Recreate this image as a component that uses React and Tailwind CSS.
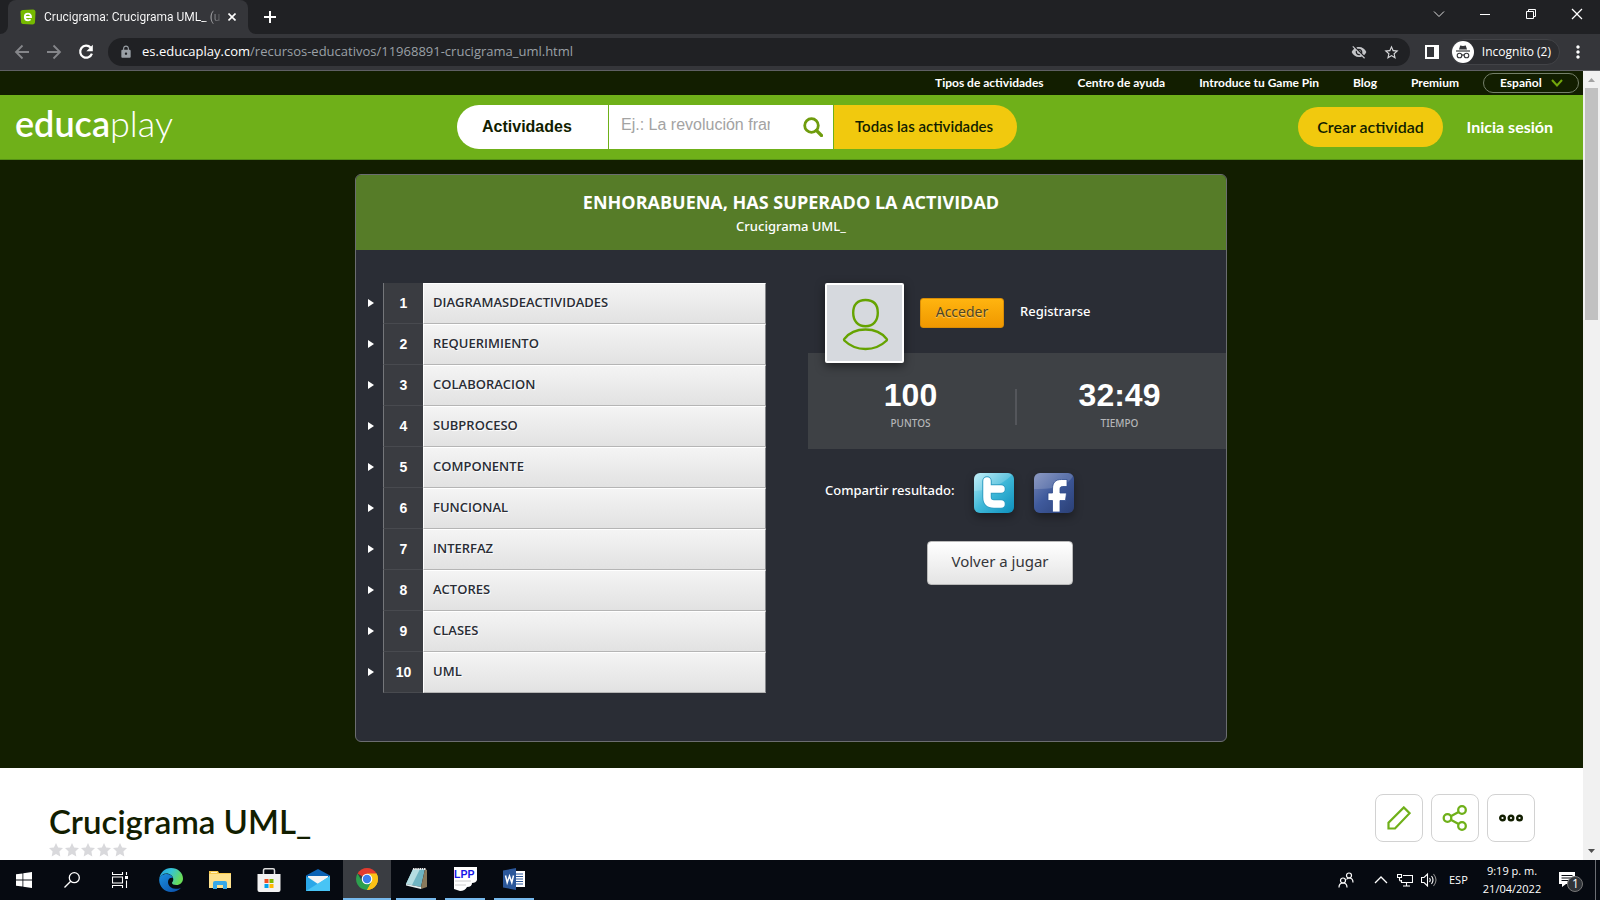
import React from 'react';
import { VscChromeClose } from 'react-icons/vsc';
import { MdLock, MdStarBorder, MdMoreVert, MdVisibilityOff } from 'react-icons/md';

const clues = [
  'DIAGRAMASDEACTIVIDADES',
  'REQUERIMIENTO',
  'COLABORACION',
  'SUBPROCESO',
  'COMPONENTE',
  'FUNCIONAL',
  'INTERFAZ',
  'ACTORES',
  'CLASES',
  'UML',
];

function TabStrip() {
  return (
    <div className="flex h-[34px] shrink-0 items-start justify-between bg-[#202124] text-white">
      <div className="flex h-full items-end">
        <svg className="size-2" viewBox="0 0 8 8"><path d="M8 0v8H0a8 8 0 0 0 8-8z" fill="#35363a" /></svg>
        <div className="flex h-full w-60 items-center rounded-t-lg bg-[#35363a] pl-3 pr-2">
          <svg className="size-4 shrink-0" viewBox="0 0 16 16">
            <path d="M3 1l10-.5c1.500 0 2.500 1 2.500 2.500l-.5 10c0 1.500-1 2.500-2.500 2.500L3 15c-1.500 0-2-1-2-2.500L.5 3C.5 2 1.500 1 3 1z" fill="#76b900" />
            <path d="M4.800 8h6.200c0-2-1.200-3.300-3-3.300S4.800 6 4.800 8s1.300 3.300 3.300 3.300c1 0 1.800-.3 2.500-.9" fill="none" stroke="#fff" strokeWidth="1.800" />
          </svg>
          <span className="ml-2 w-[176px] whitespace-nowrap bg-linear-to-r from-white from-90% to-[#55565a] bg-clip-text font-[Roboto,sans-serif] text-xs text-transparent">
            Crucigrama: Crucigrama UML_ (u
          </span>
          <button aria-label="Cerrar pestaña" className="ml-1 flex size-4 shrink-0 items-center justify-center">
            <svg className="size-2" viewBox="0 0 8 8"><path d="M.5.5l7 7m0-7l-7 7" stroke="#fff" strokeWidth="1.600" /></svg>
          </button>
        </div>
        <svg className="size-2" viewBox="0 0 8 8"><path d="M0 0v8h8a8 8 0 0 1-8-8z" fill="#35363a" /></svg>
        <button aria-label="Nueva pestaña" className="flex h-full w-7 items-center justify-center">
          <svg className="size-3" viewBox="0 0 12 12"><path d="M6 0v12M0 6h12" stroke="#fff" strokeWidth="2" /></svg>
        </button>
      </div>
      <div className="flex h-7 w-[184px] items-center">
        <button aria-label="Buscar pestañas" className="flex flex-1 justify-center">
          <svg className="h-3 w-3" viewBox="0 0 12 12"><path d="M1 3.500l5 5 5-5" fill="none" stroke="#ddd" /></svg>
        </button>
        <button aria-label="Minimizar" className="flex flex-1 justify-center">
          <svg className="size-[10px]" viewBox="0 0 10 10"><path d="M0 5.500h10" stroke="#fff" /></svg>
        </button>
        <button aria-label="Restaurar" className="flex flex-1 justify-center">
          <svg className="size-[10px]" viewBox="0 0 10 10"><path d="M.5 2.500h7v7h-7zM2.500 2.500v-2h7v7h-2" fill="none" stroke="#fff" /></svg>
        </button>
        <button aria-label="Cerrar" className="flex flex-1 justify-center">
          <VscChromeClose className="size-4 text-white" />
        </button>
      </div>
    </div>
  );
}

function Toolbar() {
  return (
    <div className="flex h-[37px] shrink-0 items-center border-b border-[#5f6064] bg-[#35363a] pl-[14px] pr-3 font-['Open_Sans',sans-serif] text-white">
      <div className="flex items-center gap-4">
        <button aria-label="Atrás" className="size-4">
          <svg className="size-4" viewBox="0 0 16 16"><path d="M15 8H2m6.500-6.500L2 8l6.500 6.500" fill="none" stroke="#85868a" strokeWidth="1.800" /></svg>
        </button>
        <button aria-label="Adelante" className="size-4">
          <svg className="size-4" viewBox="0 0 16 16"><path d="M1 8h13M7.500 1.500L14 8l-6.500 6.500" fill="none" stroke="#85868a" strokeWidth="1.800" /></svg>
        </button>
        <button aria-label="Recargar" className="size-4">
          <svg className="size-4" viewBox="0 0 16 16"><path d="M12.600 3.600A6 6 0 1 0 13.900 9.600" fill="none" stroke="#fff" strokeWidth="2.200" /><path d="M14.800.8v6.400H8.400z" fill="#fff" /></svg>
        </button>
      </div>
      <div className="ml-[14px] flex h-7 flex-1 items-center rounded-full bg-[#202124] pl-[11px] pr-[10px]">
        <MdLock className="size-[14px] text-[#9aa0a6]" />
        <a href="#url" className="ml-[9px] flex-1 text-[13px] text-[#9aa0a6]">
          <span className="text-white">es.educaplay.com</span>/recursos-educativos/11968891-crucigrama_uml.html
        </a>
        <MdVisibilityOff className="size-4 text-[#c4c5c8]" />
        <button aria-label="Añadir a marcadores" className="ml-4"><MdStarBorder className="size-[17px] text-[#d6d7d9]" /></button>
      </div>
      <button aria-label="Panel lateral" className="ml-[15px]">
        <svg className="size-[14px]" viewBox="0 0 14 14"><path fillRule="evenodd" d="M0 0h14v14H0zM2 2v10h7V2z" fill="#fff" /></svg>
      </button>
      <button className="ml-3 flex h-[26px] items-center whitespace-nowrap rounded-full border border-[#424347] bg-[#2b2c30] pr-2 text-xs">
        <svg className="mr-2 size-[22px]" viewBox="0 0 22 22">
          <circle cx="11" cy="11" r="11" fill="#fff" />
          <path d="M7 8.500l1.200-4 2.800.6 2.800-.6 1.200 4z" fill="#35363a" />
          <path d="M4 10h14" stroke="#35363a" strokeWidth="1.200" />
          <g fill="none" stroke="#35363a" strokeWidth="1.100"><circle cx="7.500" cy="14.500" r="2.300" /><circle cx="14.500" cy="14.500" r="2.300" /><path d="M9.800 14.200q1.200-.6 2.400 0" /></g>
        </svg>
        Incognito (2)
      </button>
      <button aria-label="Menú" className="ml-2"><MdMoreVert className="size-5" /></button>
    </div>
  );
}

function TopLinks() {
  return (
    <nav className="flex h-6 items-center justify-end gap-[34px] pb-px pr-1 font-[Lato,sans-serif] text-xs font-bold text-white">
      <a href="#tipos">Tipos de actividades</a>
      <a href="#ayuda">Centro de ayuda</a>
      <a href="#pin">Introduce tu Game Pin</a>
      <a href="#blog">Blog</a>
      <a href="#premium">Premium</a>
      <div className="relative -ml-[10px] w-24">
        <select aria-label="Idioma" className="block h-5 w-full appearance-none rounded-full border border-[#75806a] bg-transparent pl-4 leading-none">
          <option>Español</option>
        </select>
        <svg className="pointer-events-none absolute right-4 top-[6px] h-2 w-3" viewBox="0 0 12 8"><path d="M1 1l5 5.500L11 1" fill="none" stroke="#73a80c" strokeWidth="2" /></svg>
      </div>
    </nav>
  );
}

function Header() {
  return (
    <header className="flex h-[65px] items-center justify-between border-b border-[#559016] bg-[#6fb019] pl-[15px] pr-[30px]">
      <a href="#inicio" className="w-[161px] pb-2 font-[Lato,sans-serif] text-4xl leading-none text-white">
        <span className="font-semibold">educa</span><span className="font-light">play</span>
      </a>
      <form className="flex h-11 w-[560px] overflow-hidden rounded-full" onSubmit={(e) => e.preventDefault()}>
        <select aria-label="Tipo de búsqueda" className="w-[151px] appearance-none bg-white pl-[25px] font-['Liberation_Sans',sans-serif] text-base font-bold text-[#121e00]">
          <option>Actividades</option>
        </select>
        <div className="ml-px flex flex-1 items-center bg-white pl-3 pr-[10px]">
          <input aria-label="Buscar" placeholder="Ej.: La revolución francesa" className="w-[149px] pb-1 font-['Liberation_Sans',sans-serif] text-base text-black outline-none placeholder:text-[#a3a3a3]" />
          <button aria-label="Buscar actividades" className="ml-auto">
            <svg className="size-5" viewBox="0 0 20 20"><circle cx="8.500" cy="8.500" r="6.800" fill="none" stroke="#6f9c0d" strokeWidth="2.800" /><path d="M13.500 13.500l5 5" stroke="#6f9c0d" strokeWidth="3.200" strokeLinecap="round" /></svg>
          </button>
        </div>
        <a href="#todas" className="ml-px flex w-[183px] items-center bg-[#f1c90e] pb-0.5 pl-[21px] font-[Lato,sans-serif] text-[15px] font-semibold text-[#121e00]">Todas las actividades</a>
      </form>
      <div className="flex w-[255px] items-center justify-between whitespace-nowrap font-[Lato,sans-serif] text-base">
        <a href="#crear" className="flex h-10 w-[145px] items-center justify-center rounded-full bg-[#f1c90e] font-semibold text-[#121e00]">Crear actividad</a>
        <a href="#sesion" className="font-bold text-white">Inicia sesión</a>
      </div>
    </header>
  );
}

function ClueList() {
  return (
    <ol className="w-[410px] pt-[33px] font-['Open_Sans',sans-serif] text-[13px]">
      {clues.map((clue, i) => (
        <li key={clue} className="flex h-[41px] items-stretch">
          <button aria-label={`Ver pista ${i + 1}`} className="flex w-[27px] items-center pb-0.5 pl-3">
            <svg className="h-2 w-[6px]" viewBox="0 0 6 8"><path d="M0 0l6 4-6 4z" fill="#fff" /></svg>
          </button>
          <span className="flex w-10 items-center justify-center border-b border-l border-b-[#484a4f] border-l-[#74767a] bg-[#3a3c41] font-['Liberation_Sans',sans-serif] text-sm font-bold text-white">{i + 1}</span>
          <span className="flex flex-1 items-center border-x border-b border-t border-b-[#b5b5b5] border-l-white border-r-[#85868a] border-t-white bg-linear-to-b from-[#f4f4f4] to-[#e2e2e2] pb-px pl-[9px] font-semibold text-[#2a2d35] text-shadow-[1px_1px_1px_white]">{clue}</span>
        </li>
      ))}
    </ol>
  );
}

function Results() {
  return (
    <div className="w-[418px] pt-[33px] font-['Noto_Sans',sans-serif] text-[13px] text-white">
      <div className="relative z-10 -mb-[10px] flex pl-[17px]">
        <div className="h-20 w-[79px] rounded-xs border-2 border-white bg-[#d6d9de] shadow-[0_3px_10px_rgba(0,0,0,0.5)]">
          <svg className="h-[76px] w-[75px]" viewBox="2 2 75 76">
            <g fill="none" stroke="#65a300" strokeWidth="2.400">
              <path d="M40.500 17c8 0 12.300 4.500 12.300 12.800s-4.800 13.500-12.300 13.500-12.300-5.200-12.300-13.500S32.500 17 40.500 17z" />
              <path d="M19.300 57.500q-.6-.8 0-1.600C24 50 31 46.500 40.500 46.500S57 50 61.700 55.900q.6.8 0 1.600C56 63 49 66 40.500 66S25 63 19.300 57.500z" />
            </g>
          </svg>
        </div>
        <button className="ml-4 mt-[15px] h-[30px] w-[84px] rounded-[3px] border border-[#d98c06] bg-linear-to-b from-[#ffb40f] to-[#f09800] pb-0.5 text-sm text-[#4f4624] text-shadow-[0_1px_1px_#ffd070]">Acceder</button>
        <a href="#registro" className="ml-4 mt-[18px] font-medium leading-5">Registrarse</a>
      </div>
      <div className="flex h-24 items-center bg-[#3e4145] text-center">
        <div className="flex-1 pr-0.5 pt-[10px]">
          <div className="font-['Liberation_Sans',sans-serif] text-[32px] font-bold leading-8">100</div>
          <div className="mt-0.5 text-[10px] font-medium leading-5 text-[#b4b5b7]">PUNTOS</div>
        </div>
        <div className="mt-3 h-9 w-0.5 bg-[#54565b]" />
        <div className="flex-1 pr-1 pt-[10px]">
          <div className="font-['Liberation_Sans',sans-serif] text-[32px] font-bold leading-8">32:49</div>
          <div className="mt-0.5 text-[10px] font-medium leading-5 text-[#b4b5b7]">TIEMPO</div>
        </div>
      </div>
      <div className="mt-6 flex items-center pl-[17px]">
        <span className="w-[149px] whitespace-nowrap pb-1 font-medium">Compartir resultado:</span>
        <a href="#twitter" aria-label="Twitter" className="rounded-md shadow-[0_4px_8px_rgba(0,0,0,0.35)]">
          <svg className="size-10" viewBox="0 0 40 40">
            <defs>
              <linearGradient id="tw" x1="0" y1="0" x2="1" y2="1"><stop offset="0" stopColor="#b4ecf7" /><stop offset=".5" stopColor="#3fb8d8" /><stop offset="1" stopColor="#0c8fbc" /></linearGradient>
            </defs>
            <rect width="40" height="40" rx="6" fill="url(#tw)" />
            <path d="M0 18V6a6 6 0 0 1 6-6h28a6 6 0 0 1 4 2Q22 17 0 18z" fill="#fff" opacity=".18" />
            <path d="M13 8v16q0 7 7 7h7M13 16h14" fill="none" stroke="#2f9dc2" strokeWidth="9.500" strokeLinecap="round" />
            <path d="M13 8v16q0 7 7 7h7M13 16h14" fill="none" stroke="#fff" strokeWidth="7.500" strokeLinecap="round" />
          </svg>
        </a>
        <a href="#facebook" aria-label="Facebook" className="ml-5 rounded-md shadow-[0_4px_8px_rgba(0,0,0,0.35)]">
          <svg className="size-10" viewBox="0 0 40 40">
            <defs>
              <linearGradient id="fb" x1="0" y1="0" x2="1" y2="1"><stop offset="0" stopColor="#7787b8" /><stop offset=".45" stopColor="#3f5a9c" /><stop offset="1" stopColor="#2a3f75" /></linearGradient>
            </defs>
            <rect width="40" height="40" rx="6" fill="url(#fb)" />
            <path d="M0 16V6a6 6 0 0 1 6-6h28a6 6 0 0 1 5 3Q32 17 0 16z" fill="#fff" opacity=".16" />
            <path d="M18.500 39V27.500H14V20h4.500v-4c0-6.500 3-9.500 9-9.500H33v7h-4.500c-1.700 0-2.500.8-2.500 2.500v4h6.500l-1 7.500H26V39z" fill="#fff" stroke="#2d4a8c" strokeWidth=".8" />
          </svg>
        </a>
      </div>
      <button className="ml-[119px] mt-7 h-11 w-[146px] rounded border border-[#b9b9b9] bg-linear-to-b from-white to-[#e4e4e4] pb-1 text-[15px] text-[#35363a]">Volver a jugar</button>
    </div>
  );
}

function Scrollbar() {
  return (
    <div className="flex w-[17px] shrink-0 flex-col items-center justify-between bg-[#f1f1f1]">
      <div className="flex w-full flex-col items-center">
        <svg className="h-[17px] w-[17px]" viewBox="0 0 17 17"><path d="M5 11l3.500-4 3.500 4z" fill="#a3a3a3" /></svg>
        <div className="h-[232px] w-[13px] bg-[#c1c1c1]" />
      </div>
      <svg className="h-[17px] w-[17px]" viewBox="0 0 17 17"><path d="M5 6l3.500 4L12 6z" fill="#505050" /></svg>
    </div>
  );
}

function ActivityFooter() {
  const box = 'flex size-12 items-center justify-center rounded-lg border border-[#d2d2d2]';
  return (
    <section className="flex flex-1 items-start justify-between bg-white pl-[49px] pr-12 pt-[26px]">
      <div>
        <h1 className="mb-0.5 pt-[7px] font-[Lato,sans-serif] text-[33px] font-semibold leading-10 text-[#121e00]">Crucigrama UML_</h1>
        <div className="flex gap-0.5">
          {[1, 2, 3, 4, 5].map((n) => (
            <svg key={n} className="size-[14px]" viewBox="0 0 14 14"><path d="M7 0l2.100 4.500 4.900.6-3.600 3.400.9 5L7 11.100l-4.300 2.400.9-5L0 5.100l4.900-.6z" fill="#d9d9dc" /></svg>
          ))}
        </div>
      </div>
      <div className="flex gap-2">
        <button aria-label="Editar" className={box}>
          <svg className="size-6" viewBox="0 0 24 24"><path d="M1.500 22.500v-5.800L16.800 1.400l5.800 5.800L8 22.500z" fill="none" stroke="#6fb019" strokeWidth="2.200" /></svg>
        </button>
        <button aria-label="Compartir" className={box}>
          <svg className="size-[26px]" viewBox="0 0 26 26"><g fill="none" stroke="#6fb019" strokeWidth="2.300"><circle cx="5.500" cy="13" r="3.800" /><circle cx="20" cy="5" r="3.800" /><circle cx="20" cy="21" r="3.800" /><path d="M8.800 11.200l7.800-4.300M8.800 14.800l7.800 4.300" /></g></svg>
        </button>
        <button aria-label="Más opciones" className={box}>
          <svg className="h-2 w-6" viewBox="0 0 24 8"><g fill="none" stroke="#121e00" strokeWidth="2.400"><circle cx="3.500" cy="4" r="2.300" /><circle cx="12" cy="4" r="2.300" /><circle cx="20.500" cy="4" r="2.300" /></g></svg>
        </button>
      </div>
    </section>
  );
}

function Taskbar() {
  const item = 'flex h-full w-12 items-center justify-center';
  return (
    <footer className="flex h-10 shrink-0 items-stretch justify-between bg-[#060a11] font-['Open_Sans',sans-serif] text-xs text-white">
      <div className="flex">
        <button aria-label="Inicio" className={item}>
          <svg className="size-4" viewBox="0 0 16 16"><path d="M0 2.300l6.500-.9v6.100H0zM7.300 1.300L16 0v7.500H7.300zM0 8.400h6.500v6.200L0 13.700zM7.300 8.400H16V16l-8.700-1.200z" fill="#fff" /></svg>
        </button>
        <button aria-label="Buscar en Windows" className={item}>
          <svg className="size-4" viewBox="0 0 16 16"><g fill="none" stroke="#fff" strokeWidth="1.300"><circle cx="10.300" cy="5.700" r="5" /><path d="M6.700 9.300L.5 15.500" /></g></svg>
        </button>
        <button aria-label="Vista de tareas" className={item}>
          <svg className="size-4" viewBox="0 0 16 16"><path d="M.5 0v2.500h10V0M.5 16v-2.500h10V16M.5 5h10v6H.5zM14.500 0v3M14.500 8.500V16" fill="none" stroke="#fff" strokeWidth="1.100" /><path d="M13 4h3v3h-3z" fill="#fff" /></svg>
        </button>
        <button aria-label="Edge" className="ml-[3px] flex h-full w-12 items-center justify-center">
          <svg className="size-6" viewBox="0 0 24 24">
            <defs>
              <linearGradient id="e1" x1="0" y1="0" x2="1" y2=".4"><stop offset="0" stopColor="#1f9fe0" /><stop offset=".5" stopColor="#35c3d6" /><stop offset="1" stopColor="#68dc58" /></linearGradient>
              <linearGradient id="e2" x1="0" y1="0" x2="1" y2="1"><stop offset="0" stopColor="#1b8fe0" /><stop offset="1" stopColor="#0a4da8" /></linearGradient>
            </defs>
            <path d="M.3 11C1 4.500 6 0 12 0c7 0 12 5 12 10.500 0 4-3 6.500-6.500 6.500-3 0-4.500-1-4.500-2s1.300-1.500 1.300-3.500C14.300 8 11 5.500 7.500 5.500 4 5.500 1.500 7.500.3 11z" fill="url(#e1)" />
            <path d="M.2 12.500C0 8.500 3.500 6 7.500 6c3.500 0 6 2 6.500 4-2.500-.8-5 .8-5 4 0 4 3.800 7 8 7 2 0 3.800-.6 5-1.300C20 22.300 16.500 24 12 24 5.500 24 .4 18.500.2 12.500z" fill="url(#e2)" />
            <path d="M9 14c0 4 3.800 7 8 7 2 0 3.800-.6 5-1.300-1 .8-9 2.800-12-2.200C9.300 16 9 15 9 14z" fill="#0c59a4" />
          </svg>
        </button>
        <button aria-label="Explorador" className="ml-px flex h-full w-12 items-center justify-center">
          <svg className="h-[18px] w-[22px]" viewBox="0 0 22 18"><path d="M0 0h9l1 2h12v15H0z" fill="#f8c94c" /><path d="M0 3h22v14H0z" fill="#fde18d" /><path d="M4 18v-6q0-2 2-2h10q2 0 2 2v6h-4v-4H8v4z" fill="#35a8e8" /><path d="M2 1h6v1H2z" fill="#fff3c4" /></svg>
        </button>
        <button aria-label="Microsoft Store" className="ml-px flex h-full w-12 items-center justify-center">
          <svg className="size-6" viewBox="0 0 24 24"><path d="M6.500 6V2.500Q6.500.8 8 .8h8q1.500 0 1.500 1.700V6" fill="none" stroke="#ddd" strokeWidth="1.500" /><path d="M.5 6h23v16q0 2-2 2h-19q-2 0-2-2z" fill="#f2f2f2" /><path d="M7.500 11h4v4h-4z" fill="#f25022" /><path d="M12.500 11h4v4h-4z" fill="#7fba00" /><path d="M7.500 16h4v4h-4z" fill="#00a4ef" /><path d="M12.500 16h4v4h-4z" fill="#ffb900" /></svg>
        </button>
        <button aria-label="Correo" className="ml-px flex h-full w-12 items-center justify-center">
          <svg className="size-6" viewBox="0 0 24 24"><path d="M0 7.500L12 1l12 6.500V12H0z" fill="#0a62b4" /><path d="M2 8h20v9H2z" fill="#f4f4f4" /><path d="M0 8l12 8L24 8v15H0z" fill="#2aa7e8" /><path d="M24 8L0 23h24z" fill="#48c4f5" /></svg>
        </button>
        <button aria-label="Chrome" className="ml-px flex h-full w-12 items-center justify-center border-b-2 border-[#76b9ed] bg-[#3a3d42]">
          <svg className="size-[22px]" viewBox="0 0 22 22"><path d="M11 11L1.500 5.500A11 11 0 0 1 20.500 5.500z" fill="#e33b2e" /><path d="M11 11L20.500 5.500A11 11 0 0 1 11 22z" fill="#fbc116" /><path d="M11 22A11 11 0 0 1 1.500 5.500L6.500 14 11 11l4.500 3z" fill="#2da04e" /><path d="M11 5.500h9.500A11 11 0 0 1 11 22l4.700-8.200z" fill="#fbc116" /><circle cx="11" cy="11" r="5.300" fill="#fff" /><circle cx="11" cy="11" r="4.200" fill="#3b7ded" /></svg>
        </button>
        <button aria-label="Bloc de notas" className="ml-[5px] flex h-full w-10 items-center justify-center border-b-2 border-[#76b9ed]">
          <svg className="size-6" viewBox="0 0 24 24">
            <path d="M9 2h12l-4 18L2 17z" fill="#6fb4c2" />
            <path d="M9 2h7l-8 16-6-1z" fill="#b4dde2" />
            <path d="M2 17l15 3v2L2 18.500z" fill="#e4eef0" />
            <path d="M21 2l2 1v17l-6 2v-2z" fill="#8a7a5c" />
            <path d="M9 2h13" stroke="#e8e8e8" strokeWidth="1.800" strokeDasharray="1.500 .7" />
          </svg>
        </button>
        <button aria-label="LPP" className="ml-[9px] flex h-full w-10 items-center justify-center border-b-2 border-[#76b9ed]">
          <svg className="size-6" viewBox="0 0 24 24"><path d="M1 0h23v13q-1 3-5 3 0 4-5 4-2 4-7 4L1 22z" fill="#fff" /><path d="M2 14h16M2 18h11" stroke="#ccc" /><text x="1" y="11" fontFamily="Liberation Sans" fontWeight="700" fontSize="10.500" fill="#1717e6">LPP</text></svg>
        </button>
        <button aria-label="Word" className="ml-[9px] flex h-full w-10 items-center justify-center border-b-2 border-[#76b9ed]">
          <svg className="size-[22px]" viewBox="0 0 22 22"><path d="M12 3h10v16H12z" fill="#fff" /><path d="M13 6h7M13 8.500h7M13 11h7M13 13.500h7M13 16h7" stroke="#2b579a" /><path d="M0 2.500L13 0v22L0 19.500z" fill="#2b579a" /><path d="M2.500 7.500l1.700 7 2.300-6.500 2.300 6.500 1.700-7" fill="none" stroke="#fff" strokeWidth="1.500" /></svg>
        </button>
      </div>
      <div className="flex items-center">
        <svg className="size-4" viewBox="0 0 16 16"><g fill="none" stroke="#fff" strokeWidth="1.200"><circle cx="11" cy="3.500" r="2.500" /><circle cx="5" cy="8.500" r="2.500" /><path d="M1 15.500q0-4.500 4-4.500t4 4.500M8.500 7.500q1-1.500 2.500-1.500 4 0 4 4.500" /></g></svg>
        <svg className="ml-5 size-[14px]" viewBox="0 0 14 14"><path d="M1 10l6-6 6 6" fill="none" stroke="#fff" strokeWidth="1.300" /></svg>
        <svg className="ml-[9px] h-[14px] w-4" viewBox="0 0 16 14"><path d="M6 2.500h9.500v7H4.500V7M9.500 9.500v3M6 13h7M.5 1.500h4v3h-4zM2.500 4.500V7q0 1 2 1" fill="none" stroke="#fff" strokeWidth="1.100" /></svg>
        <svg className="ml-2 size-4" viewBox="0 0 16 16"><g fill="none" stroke="#fff" strokeWidth="1.100"><path d="M.5 5.500H3l3.500-3.500v12L3 10.500H.5zM8.500 6q1.500 2 0 4M10.500 4q3 4 0 8" /><path d="M12.500 2q5 6 0 12" stroke="#888" /></g></svg>
        <span className="ml-3 w-5 text-[11px]">ESP</span>
        <div className="ml-3 w-[62px] whitespace-nowrap text-center text-[11px] leading-[18px]">9:19 p. m.<br />21/04/2022</div>
        <button aria-label="Notificaciones" className="relative ml-4 mr-3 size-6">
          <svg className="size-6" viewBox="0 0 24 24"><path d="M0 4h16v12H7l-4 3v-3H0z" fill="#fff" /><path d="M2.500 7.500h11M2.500 10h11M2.500 12.500h11" stroke="#060a11" /><circle cx="16" cy="16" r="7.500" fill="#2f3338" stroke="#777" /></svg>
          <span className="absolute left-[13px] top-2 text-xs leading-4">1</span>
        </button>
        <div className="mr-1 h-full w-px bg-[#6b6e73]" />
      </div>
    </footer>
  );
}

export default function App() {
  return (
    <div className="flex h-screen flex-col overflow-hidden">
      <TabStrip />
      <Toolbar />
      <div className="flex min-h-0 flex-1">
        <main className="flex min-w-0 flex-1 flex-col overflow-hidden bg-[#121e00]">
          <TopLinks />
          <Header />
          <div className="flex shrink-0 justify-center pb-[26px] pr-px pt-[14px]">
            <article className="w-[872px] overflow-hidden rounded-md border border-[#6b6d70] bg-[#2a2d35]">
              <div className="h-[75px] bg-[#567c28] pt-[15px] text-center font-['Noto_Sans',sans-serif] text-white">
                <h2 className="font-['Open_Sans',sans-serif] text-lg font-bold leading-6">ENHORABUENA, HAS SUPERADO LA ACTIVIDAD</h2>
                <p className="text-[13px] font-medium leading-6">Crucigrama UML_</p>
              </div>
              <div className="flex h-[491px] justify-between">
                <ClueList />
                <Results />
              </div>
            </article>
          </div>
          <ActivityFooter />
        </main>
        <Scrollbar />
      </div>
      <Taskbar />
    </div>
  );
}
